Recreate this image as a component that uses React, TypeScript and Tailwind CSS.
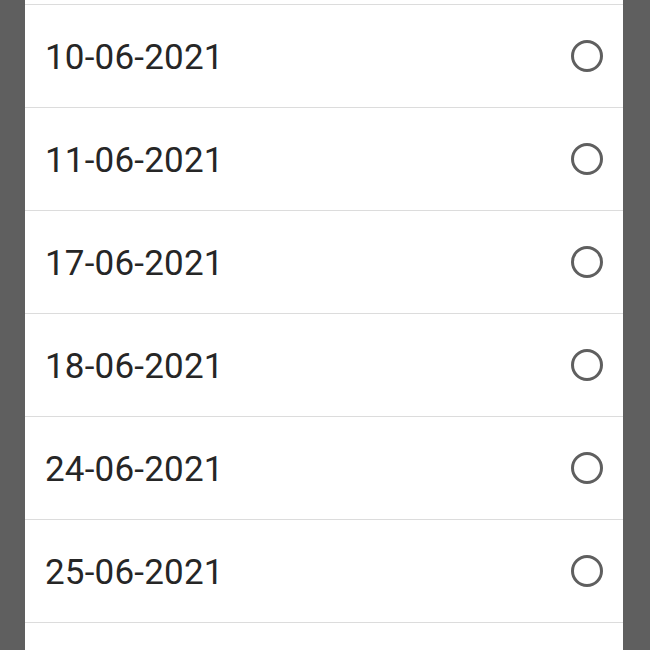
import React from "react";

const dates = ["10-06-2021", "11-06-2021", "17-06-2021", "18-06-2021", "24-06-2021", "25-06-2021"];

export default function App() {
  return (
    <div className="w-[650px] h-[650px] bg-[#5f5f5f] flex justify-center overflow-hidden">
      <div className="w-[598px] ml-[-2px] h-full bg-white flex flex-col">
        <div className="h-[4px] shrink-0" />
        {dates.map((d) => (
          <div key={d} className="h-[103px] shrink-0 border-t border-[#dcdcdc] flex items-center justify-between pl-[20px] pr-[20px]">
            <span className="text-[35px] text-[#262626] tracking-[0.2px] mt-[4px]" style={{ fontFamily: "Roboto, sans-serif" }}>{d}</span>
            <div className="w-[32px] h-[32px] rounded-full border-[3px] border-[#5f5f5f]" />
          </div>
        ))}
        <div className="flex-1 border-t border-[#dcdcdc]" />
      </div>
    </div>
  );
}
